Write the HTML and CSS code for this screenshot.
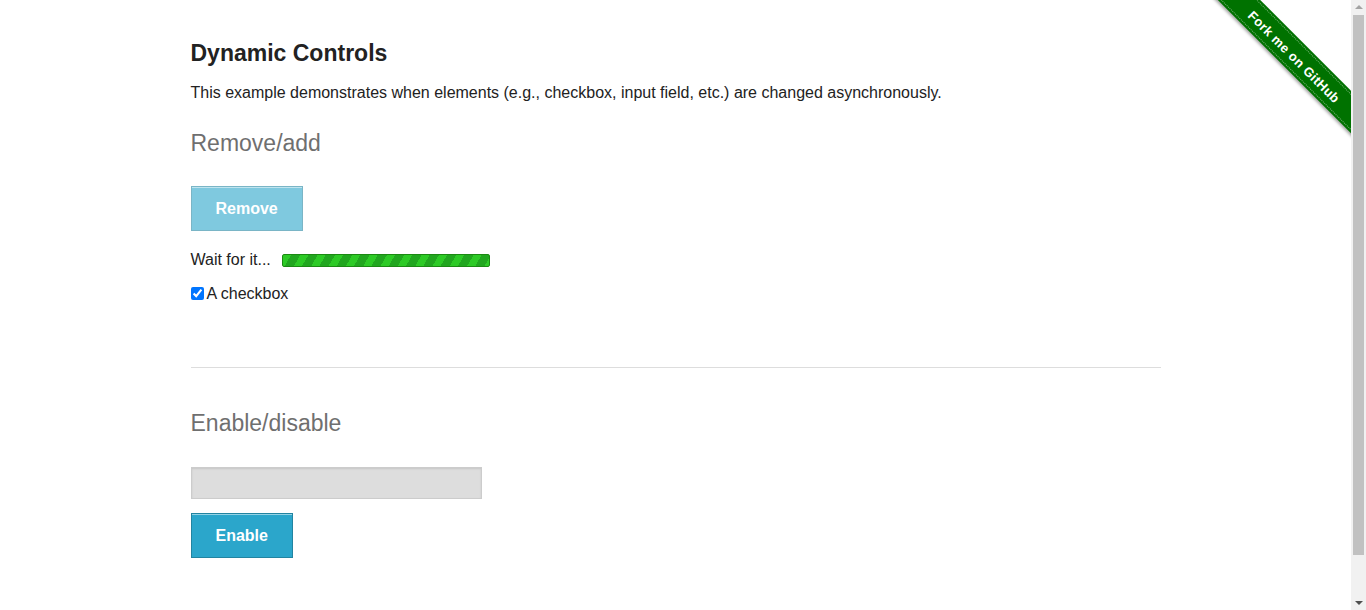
FILE: index.html
```html
<!DOCTYPE html>
<html lang="en">
<head>
<meta charset="utf-8">
<title>The Internet</title>
<link rel="stylesheet" href="styles.css">
</head>
<body>
<div class="viewport">
  <div class="ribbon"><a class="ribbon-band" href="#">Fork me on GitHub</a></div>
  <div class="page">
    <div class="example">
      <h3 class="title">Dynamic Controls</h3>
      <p class="intro">This example demonstrates when elements (e.g., checkbox, input field, etc.) are changed asynchronously.</p>
      <h4 class="subheader">Remove/add</h4>
      <form class="checkbox-form">
        <button class="btn btn-muted btn-remove" type="button">Remove</button>
        <div class="loading"><span>Wait for it...</span><span class="progress"></span></div>
        <label class="check"><input class="check-box" type="checkbox" checked>A checkbox</label>
      </form>
      <hr class="divider">
      <h4 class="subheader subheader-second">Enable/disable</h4>
      <form class="input-form">
        <input class="field" type="text" disabled>
        <button class="btn btn-enable" type="button">Enable</button>
      </form>
    </div>
  </div>
</div>
<div class="scrollbar">
  <span class="sb-arrow sb-up"></span>
  <span class="sb-thumb"></span>
  <span class="sb-arrow sb-down"></span>
</div>
</body>
</html>
```
FILE: styles.css
```css
html, body {
  margin: 0;
  padding: 0;
}
body {
  display: flex;
  height: 610px;
  overflow: hidden;
  font-family: "Liberation Sans", Arial, sans-serif;
  font-size: 16px;
  color: #222;
  background: #fff;
}
.viewport {
  position: relative;
  flex: 1;
  min-width: 0;
}

/* fake classic scrollbar */
.scrollbar {
  width: 15px;
  flex: none;
  height: 610px;
  background: #f1f1f1;
  display: flex;
  flex-direction: column;
  align-items: center;
}
.sb-arrow {
  display: block;
  width: 0;
  height: 0;
  border-left: 4px solid transparent;
  border-right: 4px solid transparent;
}
.sb-up {
  margin-top: 5px;
  border-bottom: 4px solid #a3a3a3;
}
.sb-thumb {
  display: block;
  width: 11px;
  height: 540px;
  margin-top: 6px;
  background: #c1c1c1;
}
.sb-down {
  margin-top: auto;
  margin-bottom: 5px;
  border-top: 4px solid #505050;
}

/* GitHub ribbon */
.ribbon {
  position: absolute;
  top: 0;
  right: 0;
  width: 149px;
  height: 149px;
  overflow: hidden;
}
.ribbon-band {
  position: absolute;
  left: -18px;
  top: 41px;
  width: 222px;
  height: 30px;
  line-height: 33px;
  transform: rotate(45deg);
  background: #007200;
  color: #fff;
  text-align: center;
  text-decoration: none;
  font-family: "Liberation Sans", Arial, sans-serif;
  font-weight: bold;
  font-size: 13px;
  letter-spacing: 0.4px;
  box-shadow: 0 2px 3px rgba(0, 0, 0, 0.35);
}
.ribbon-band::before {
  content: "";
  position: absolute;
  left: 0;
  right: 0;
  top: 2px;
  bottom: 2px;
  border-top: 1px dotted rgba(255, 255, 255, 0.45);
  border-bottom: 1px dotted rgba(255, 255, 255, 0.45);
}

/* Page */
.page {
  width: 970px;
  margin: 0 auto;
  padding-top: 39px;
}
.title {
  margin: 0;
  font-size: 23px;
  line-height: 28px;
  font-weight: bold;
}
.intro {
  margin: 14px 0 0;
  line-height: 24px;
}
.subheader {
  margin: 24px 0 0;
  font-size: 23px;
  line-height: 28px;
  font-weight: normal;
  color: #6f6f6f;
}
.subheader-second {
  margin-top: 41px;
}
.checkbox-form,
.input-form {
  margin: 0;
}

.btn {
  display: block;
  box-sizing: border-box;
  height: 45px;
  margin: 0;
  padding: 13px 24px 12px;
  font-family: "Liberation Sans", Arial, sans-serif;
  font-size: 16px;
  line-height: 18px;
  font-weight: bold;
  color: #fff;
  background: #2ba6cb;
  border: 1px solid #2284a1;
  box-shadow: inset 0 1px 0 rgba(255, 255, 255, 0.5);
  cursor: pointer;
}
.btn-muted {
  opacity: 0.6;
  cursor: default;
}
.btn-remove {
  margin-top: 29px;
}
.btn-enable {
  margin-top: 14px;
}

.loading {
  display: flex;
  align-items: center;
  gap: 11px;
  margin-top: 19px;
  height: 20px;
  line-height: 20px;
}
.progress {
  display: block;
  box-sizing: border-box;
  width: 208px;
  height: 13px;
  margin-top: 1px;
  border: 1px solid #1b8a12;
  border-radius: 2px;
  background: repeating-linear-gradient(120deg, #2dca26 0 7px, #21a61f 7px 15px);
}

.check {
  display: flex;
  align-items: center;
  margin-top: 14px;
  height: 20px;
  line-height: 20px;
}
.check-box {
  width: 13px;
  height: 13px;
  margin: -2px 3px 0 0;
}

.divider {
  margin: 63px 0 0;
  height: 0;
  border: 0;
  border-top: 1px solid #ddd;
}

.field {
  display: block;
  box-sizing: border-box;
  width: 291px;
  height: 32px;
  margin: 30px 0 0;
  padding: 0 8px;
  background: #ddd;
  border: 1px solid #ccc;
  box-shadow: inset 0 1px 2px rgba(0, 0, 0, 0.1);
}
```
